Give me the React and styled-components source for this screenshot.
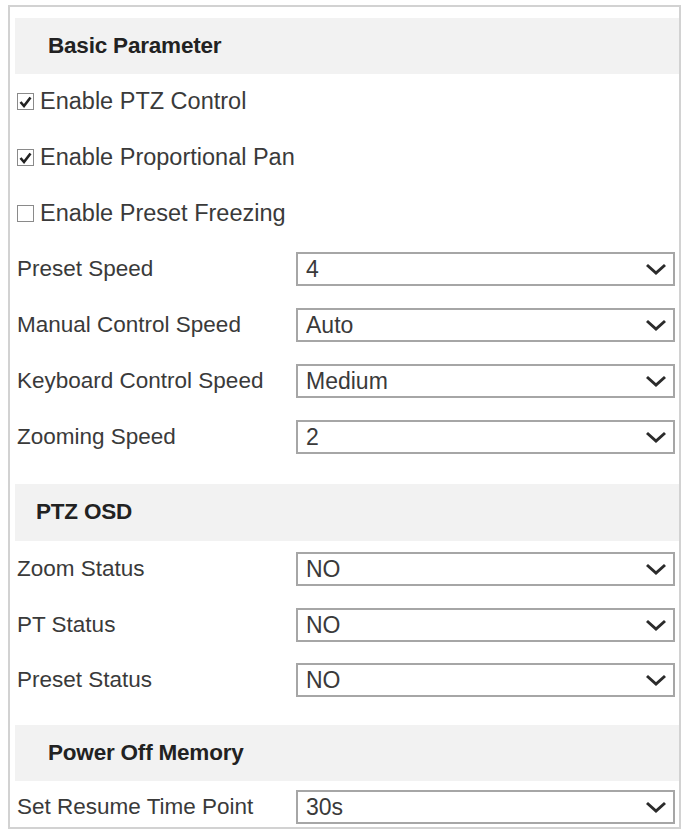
import React, { useState } from 'react';
import styled, { createGlobalStyle } from 'styled-components';

const GlobalStyle = createGlobalStyle`
  body {
    margin: 0;
    background: #ffffff;
    font-family: "Liberation Sans", Arial, sans-serif;
    color: #3a3a3a;
  }
`;

const Panel = styled.div`
  box-sizing: border-box;
  width: 673px;
  height: 824px;
  margin: 5px 0 0 8px;
  padding: 11px 0 0 0;
  border: 2px solid #d2d2d2;
  display: flex;
  flex-direction: column;
`;

const Band = styled.div`
  height: ${(props) => props.height || 56}px;
  margin: ${(props) => props.top || 0}px 0 0 5px;
  padding-left: ${(props) => props.indent}px;
  display: flex;
  align-items: center;
  background-color: #f2f2f2;
  font-size: 22.5px;
  font-weight: 700;
  letter-spacing: -0.2px;
  color: #222222;
`;

const CheckRow = styled.label`
  height: 56px;
  display: flex;
  align-items: center;
  padding-left: 7px;
  font-size: 23.5px;
  cursor: pointer;
`;

const Box = styled.span`
  box-sizing: border-box;
  width: 17px;
  height: 17px;
  margin-right: 6px;
  border: 1.5px solid #8a8a8a;
  background: #ffffff;
  display: flex;
  align-items: center;
  justify-content: center;
`;

const FieldRow = styled.div`
  box-sizing: border-box;
  height: ${(props) => props.height || 56}px;
  display: grid;
  grid-template-columns: 279px 1fr;
  align-items: center;
  padding: ${(props) => props.offset || 0}px 4px 0 7px;
  font-size: 22.5px;
`;

const SelectWrap = styled.div`
  position: relative;
  height: 34px;
`;

const Select = styled.select`
  box-sizing: border-box;
  width: 100%;
  height: 100%;
  appearance: none;
  border: 2px solid #a6a6a6;
  border-radius: 0;
  background: #ffffff;
  padding: 0 40px 0 8px;
  font-family: "Liberation Sans", Arial, sans-serif;
  font-size: 23px;
  color: #3a3a3a;
  outline: none;
`;

const Chevron = styled.svg`
  position: absolute;
  right: 8px;
  top: 50%;
  transform: translateY(-50%);
  pointer-events: none;
`;

const basicChecks = [
  { label: 'Enable PTZ Control', checked: true },
  { label: 'Enable Proportional Pan', checked: true },
  { label: 'Enable Preset Freezing', checked: false },
];

const Check = ({ label, initial }) => {
  const [on, setOn] = useState(initial);
  return (
    <CheckRow onClick={() => setOn(!on)}>
      <Box>
        {on && (
          <svg width="13" height="12" viewBox="0 0 13 12">
            <path d="M1.5 6 L5 10 L11.5 1.5" fill="none" stroke="#222" strokeWidth="2.6" />
          </svg>
        )}
      </Box>
      {label}
    </CheckRow>
  );
};

const Field = ({ label, value, options, height, offset }) => (
  <FieldRow height={height} offset={offset}>
    <span>{label}</span>
    <SelectWrap>
      <Select defaultValue={value}>
        {options.map((o) => (
          <option key={o} value={o}>
            {o}
          </option>
        ))}
      </Select>
      <Chevron width="22" height="12" viewBox="0 0 22 12">
        <path d="M2 2 L11 10 L20 2" fill="none" stroke="#2b2b2b" strokeWidth="3" />
      </Chevron>
    </SelectWrap>
  </FieldRow>
);

const speeds = ['1', '2', '3', '4', '5', '6', '7', '8'];
const yesNo = ['NO', 'YES'];

export default function App() {
  return (
    <>
      <GlobalStyle />
      <Panel>
        <Band indent={33}>Basic Parameter</Band>
        {basicChecks.map((c) => (
          <Check key={c.label} label={c.label} initial={c.checked} />
        ))}
        <Field label="Preset Speed" value="4" options={speeds} />
        <Field label="Manual Control Speed" value="Auto" options={['Auto', 'Low', 'Medium', 'High']} />
        <Field label="Keyboard Control Speed" value="Medium" options={['Low', 'Medium', 'High']} />
        <Field label="Zooming Speed" value="2" options={['1', '2', '3']} />

        <Band indent={21} top={19} height={57}>PTZ OSD</Band>
        <Field label="Zoom Status" value="NO" options={yesNo} />
        <Field label="PT Status" value="NO" options={yesNo} />
        <Field label="Preset Status" value="NO" options={yesNo} />

        <Band indent={33} top={17}>Power Off Memory</Band>
        <Field
          label="Set Resume Time Point"
          value="30s"
          options={['10s', '30s', '60s', '300s', '600s']}
          height={46}
          offset={5}
        />
      </Panel>
    </>
  );
}
